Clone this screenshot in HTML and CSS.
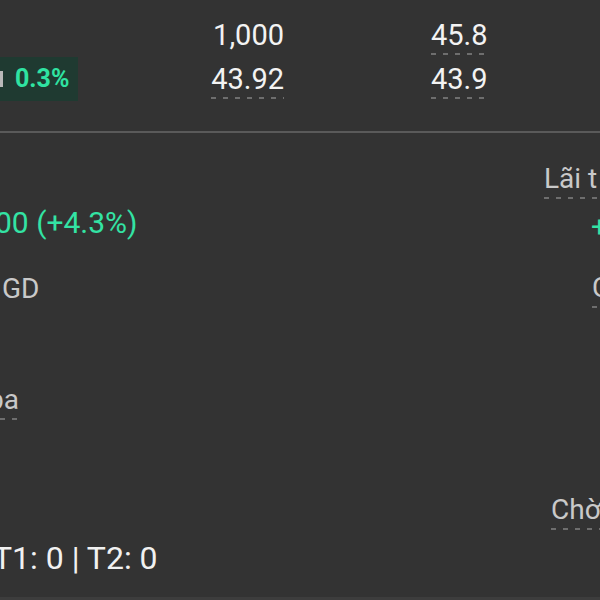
FILE: index.html
```
<!DOCTYPE html>
<html lang="vi">
<head>
<meta charset="utf-8">
<link rel="stylesheet" href="styles.css">
</head>
<body>
<div class="screen">
  <section class="quote">
    <div class="cell"></div>
    <div class="cell num right">1,000</div>
    <div class="cell num c3"><span class="dash">45.8</span></div>

    <div class="cell"><span class="badge"><span class="badge-bar"></span><span class="badge-val">0.3%</span></span></div>
    <div class="cell num right"><span class="dash">43.92</span></div>
    <div class="cell num c3"><span class="dash">43.9</span></div>
  </section>

  <section class="stats">
    <div class="col col-left">
      <div class="item green item-chg">00 (+4.3%)</div>
      <div class="item label item-gd">GD</div>
      <div class="item label item-ba"><span class="dash">ba</span></div>
      <div class="item value item-t">T1: 0 | T2: 0</div>
    </div>
    <div class="col col-right">
      <div class="item label item-lai"><span class="dash">Lãi t</span></div>
      <div class="item green item-plus">+</div>
      <div class="item label item-c"><span class="dash">C</span></div>
      <div class="item label item-cho"><span class="dash">Chờ</span></div>
    </div>
  </section>
</div>
</body>
</html>
```
FILE: styles.css
```
html, body {
  margin: 0;
  padding: 0;
  background: #333333;
}
body {
  font-family: Roboto, "Noto Sans", sans-serif;
  font-size: 28px;
  color: #f1f1f1;
}
.screen {
  width: 600px;
  height: 600px;
  overflow: hidden;
  border-bottom: 3px solid #3d3d3d;
  box-sizing: border-box;
}
.quote {
  display: grid;
  grid-template-columns: 200px 84px 1fr;
  grid-auto-rows: 44px;
  padding-top: 13px;
  height: 133px;
  box-sizing: border-box;
  border-bottom: 2px solid #5a5a5a;
}
.cell {
  line-height: 44px;
  white-space: nowrap;
}
.right { text-align: right; }
.c3 { padding-left: 147px; }
.num { color: #f3f3f3; font-size: 29px; }
.dash {
  display: inline-block;
  line-height: 28px;
  padding-bottom: 6px;
  background: repeating-linear-gradient(90deg, #6e6e6e 0 5px, transparent 5px 12px) left bottom / 100% 2px no-repeat;
}
.badge {
  display: flex;
  align-items: center;
  width: 78px;
  height: 44px;
  background: #1f3a31;
}
.badge-bar {
  width: 3px;
  height: 16px;
  background: #b9b9b9;
  margin-right: 12px;
}
.badge-val {
  color: #2fe3a2;
  font-weight: bold;
  font-size: 25px;
}
.stats {
  display: flex;
  justify-content: space-between;
}
.col {
  display: flex;
  flex-direction: column;
}
.col-left { width: 300px; }
.col-right { width: 60px; }
.item {
  line-height: 44px;
  height: 44px;
  white-space: nowrap;
}
.green { color: #33e3a4; }
.label { color: #c9c9c9; }
.value { color: #f1f1f1; }
.item-chg { margin-top: 68px; margin-left: -5px; font-size: 30px; }
.item-gd { margin-top: 22px; margin-left: 2px; }
.item-ba { margin-top: 67px; margin-left: -12px; }
.item-t { margin-top: 114px; margin-left: -7px; font-size: 32px; }
.item-lai { margin-top: 24px; margin-left: 4px; }
.item-plus { margin-top: 4px; margin-left: 51px; font-size: 30px; }
.item-c { margin-top: 17px; margin-left: 52px; }
.item-cho { margin-top: 178px; margin-left: 11px; }
```
